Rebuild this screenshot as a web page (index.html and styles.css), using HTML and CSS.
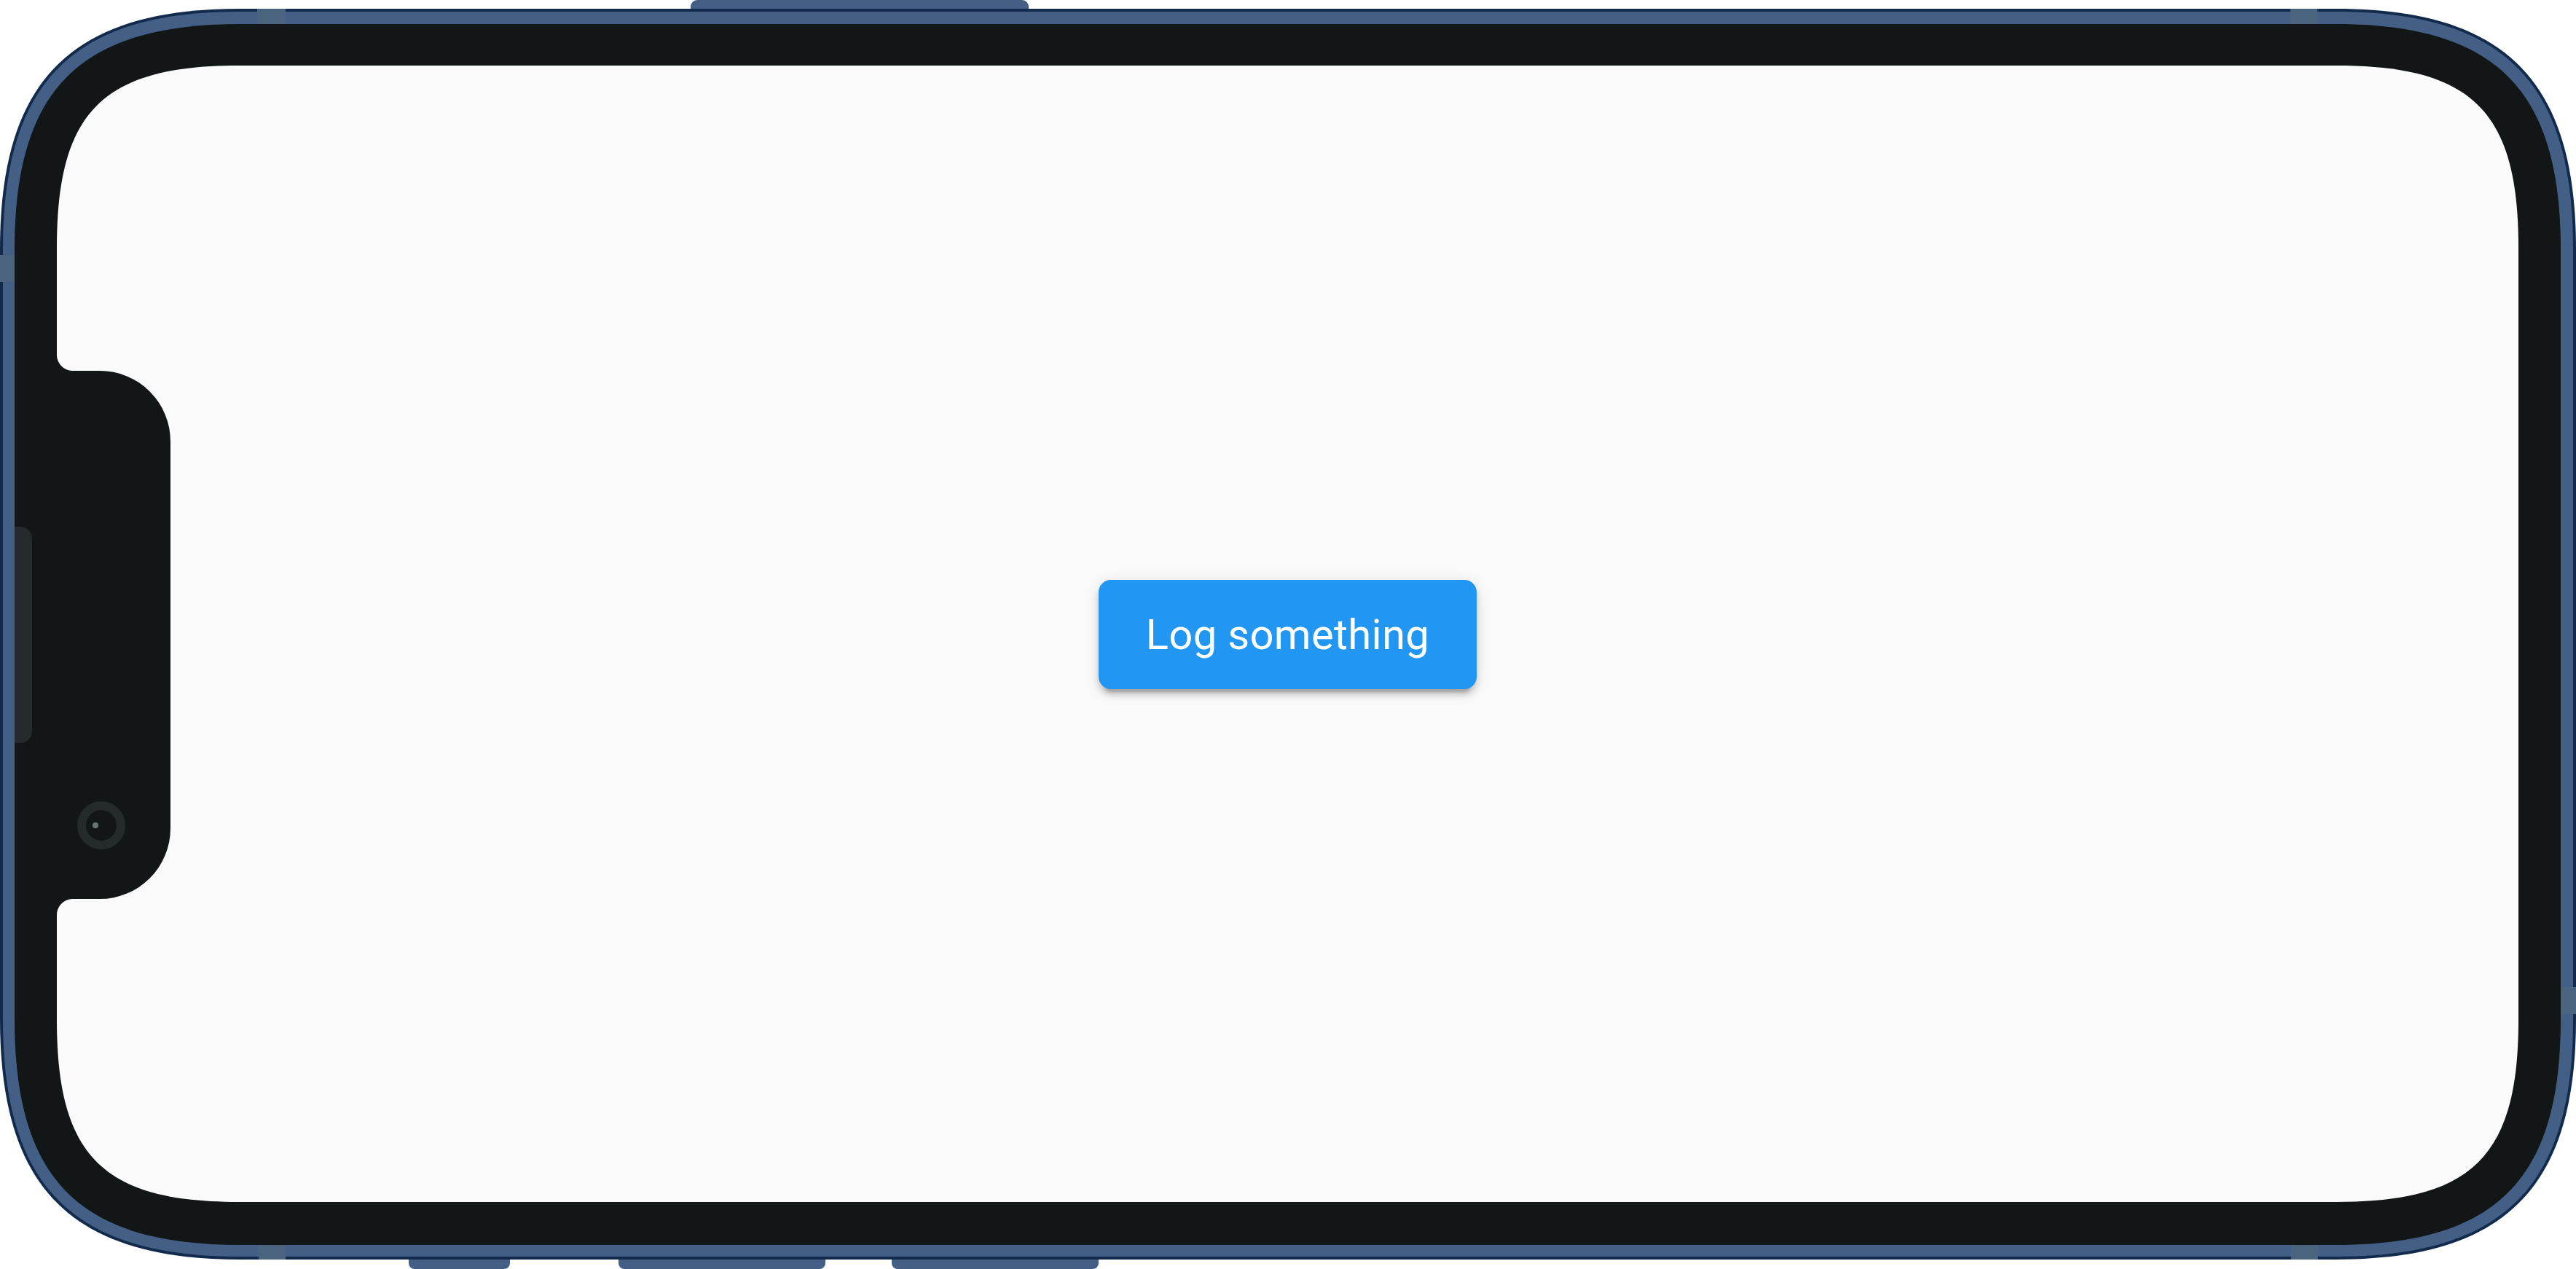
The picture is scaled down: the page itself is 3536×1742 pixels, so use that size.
FILE: index.html
```html
<!DOCTYPE html>
<html lang="en">
<head>
<meta charset="utf-8">
<title>Device preview</title>
<link rel="stylesheet" href="styles.css">
</head>
<body>
<div class="page">
  <div class="keys keys-top">
    <div class="key key-top key-t1"></div>
  </div>
  <div class="device">
    <div class="band">
      <div class="bezel">
        <div class="side-key"></div>
        <div class="screen">
          <div class="notch-corner notch-corner-top"></div>
          <div class="notch">
            <div class="camera"><div class="lens-dot"></div></div>
          </div>
          <div class="notch-corner notch-corner-bottom"></div>
          <button class="log-button" type="button">Log something</button>
        </div>
      </div>
    </div>
    <div class="marker marker-tl"></div>
    <div class="marker marker-tr"></div>
    <div class="marker marker-bl"></div>
    <div class="marker marker-br"></div>
    <div class="marker marker-left"></div>
    <div class="marker marker-right"></div>
  </div>
  <div class="keys keys-bottom">
    <div class="key key-bottom key-b1"></div>
    <div class="key key-bottom key-b2"></div>
    <div class="key key-bottom key-b3"></div>
  </div>
</div>
</body>
</html>
```

FILE: styles.css
```css
* {
  box-sizing: border-box;
}

html, body {
  margin: 0;
  padding: 0;
  background: #ffffff;
}

body {
  width: 3536px;
  height: 1742px;
  overflow: hidden;
  font-family: Roboto, "Noto Sans", sans-serif;
}

.page {
  display: flex;
  flex-direction: column;
  width: 3536px;
}

.keys {
  display: flex;
  flex-direction: row;
}

.keys-top {
  height: 12px;
  align-items: flex-end;
}

.keys-bottom {
  height: 13px;
  align-items: flex-start;
}

.key {
  background: #435f86;
  height: 100%;
}

.key-top {
  border-radius: 9px 9px 0 0;
}

.key-bottom {
  border-radius: 0 0 8px 8px;
}

.key-t1 {
  margin-left: 948px;
  width: 464px;
}

.key-b1 {
  margin-left: 561px;
  width: 139px;
}

.key-b2 {
  margin-left: 149px;
  width: 284px;
}

.key-b3 {
  margin-left: 91px;
  width: 284px;
}

/* outer navy rim */
.device {
  position: relative;
  width: 3536px;
  height: 1717px;
  padding: 4px;
  background: #122a4c;
  display: flex;
  clip-path: path("M 330 0 L 3206 0 C 3438 0 3536 98 3536 330 L 3536 1387 C 3536 1619 3438 1717 3206 1717 L 330 1717 C 98 1717 0 1619 0 1387 L 0 330 C 0 98 98 0 330 0 Z");
}

/* blue metal band */
.band {
  flex: 1;
  display: flex;
  background: #435f86;
  padding: 17px 17px 16px 16px;
  clip-path: path("M 326 0 L 3202 0 C 3432 0 3528 96 3528 326 L 3528 1383 C 3528 1613 3432 1709 3202 1709 L 326 1709 C 96 1709 0 1613 0 1383 L 0 326 C 0 96 96 0 326 0 Z");
}

.marker {
  position: absolute;
  background: #4a6480;
}

.marker-tl { top: 0; left: 353px; width: 39px; height: 21px; }
.marker-tr { top: 0; left: 3144px; width: 37px; height: 21px; }
.marker-bl { bottom: 0; left: 355px; width: 37px; height: 20px; }
.marker-br { bottom: 0; left: 3145px; width: 37px; height: 20px; }
.marker-left { left: 0; top: 338px; width: 20px; height: 37px; }
.marker-right { right: 0; top: 1343px; width: 21px; height: 37px; }

/* black bezel */
.bezel {
  position: relative;
  flex: 1;
  display: flex;
  background: #121617;
  padding: 57px 58px 59px 58px;
  clip-path: path("M 310 0 L 3185 0 C 3406 0 3495 89 3495 310 L 3495 1366 C 3495 1587 3406 1676 3185 1676 L 310 1676 C 89 1676 0 1587 0 1366 L 0 310 C 0 89 89 0 310 0 Z");
}

.side-key {
  position: absolute;
  left: 0;
  top: 690px;
  width: 24px;
  height: 297px;
  background: #252a2d;
  border-radius: 0 16px 16px 0;
}

.screen {
  position: relative;
  flex: 1;
  background: #fafafa;
  display: flex;
  align-items: center;
  justify-content: center;
  clip-path: path("M 250 0 L 3129 0 C 3316 0 3379 63 3379 250 L 3379 1310 C 3379 1497 3316 1560 3129 1560 L 250 1560 C 63 1560 0 1497 0 1310 L 0 250 C 0 63 63 0 250 0 Z");
}

.notch {
  position: absolute;
  left: 0;
  top: 419px;
  width: 156px;
  height: 725px;
  background: #121617;
  border-radius: 0 97px 97px 0;
}

.notch-corner {
  position: absolute;
  left: 0;
  width: 22px;
  height: 22px;
}

.notch-corner-top {
  top: 397px;
  background: radial-gradient(circle at 100% 0%, rgba(18, 22, 23, 0) 21.5px, #121617 22.5px);
}

.notch-corner-bottom {
  top: 1144px;
  background: radial-gradient(circle at 100% 100%, rgba(18, 22, 23, 0) 21.5px, #121617 22.5px);
}

.camera {
  position: absolute;
  left: 28px;
  top: 591px;
  width: 66px;
  height: 66px;
  border-radius: 50%;
  border: 12px solid #252a2d;
  background: #121617;
  display: flex;
  align-items: center;
  justify-content: center;
}

.lens-dot {
  width: 8px;
  height: 8px;
  border-radius: 50%;
  background: #6b7477;
  margin-right: 16px;
}

.log-button {
  width: 519px;
  height: 150px;
  margin-top: 2px;
  padding: 0;
  border: none;
  border-radius: 17px;
  background: #2196f3;
  color: #ffffff;
  font-family: Roboto, "Noto Sans", sans-serif;
  font-size: 58px;
  font-weight: 400;
  letter-spacing: 0.3px;
  box-shadow: 0 12px 4px -8px rgba(0, 0, 0, 0.2), 0 8px 8px 0 rgba(0, 0, 0, 0.14), 0 4px 20px 0 rgba(0, 0, 0, 0.12);
  display: flex;
  align-items: center;
  justify-content: center;
}
```
